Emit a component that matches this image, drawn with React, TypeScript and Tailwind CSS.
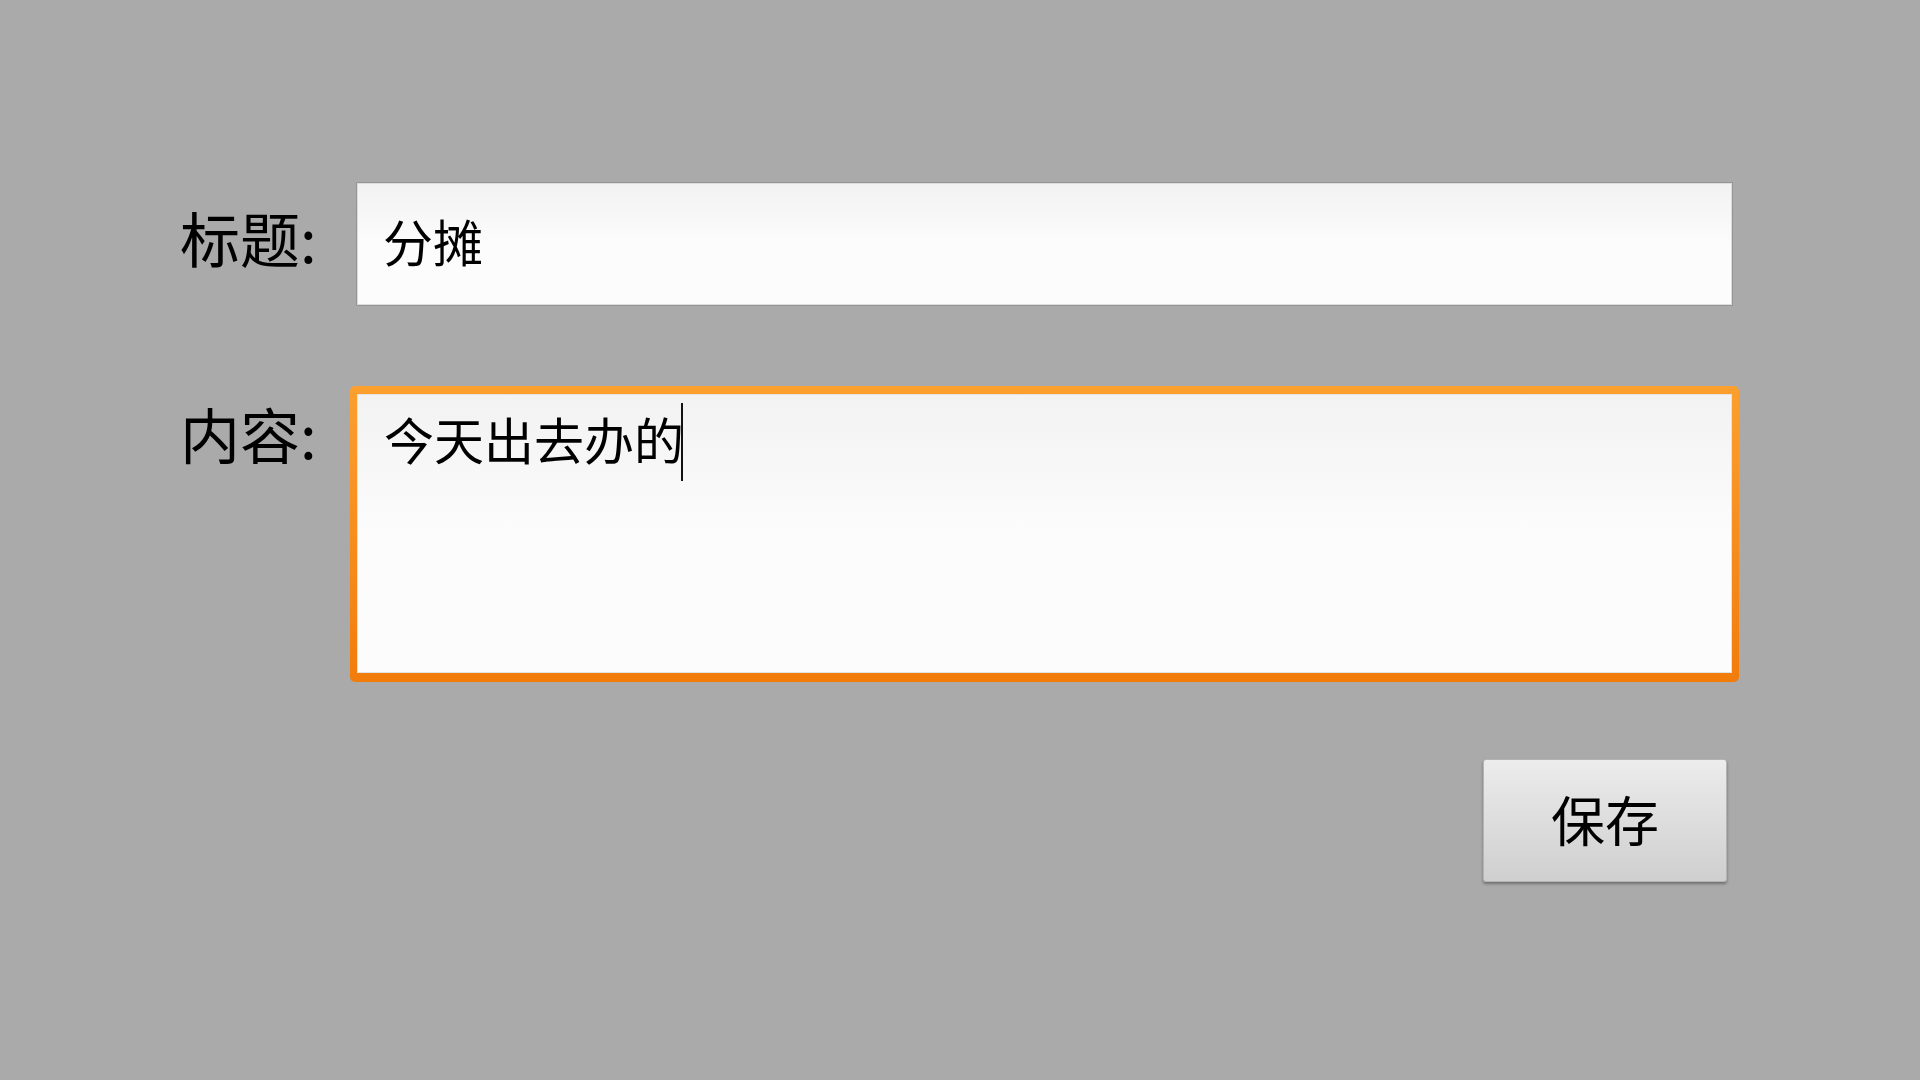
import React from 'react';

const cjk = { fontFamily: '"Noto Sans CJK SC", "Noto Sans", sans-serif' };

const App = () => {
  return (
    <div className="w-[1920px] h-[1080px] bg-[#aaaaaa] text-black overflow-hidden" style={cjk}>
      <div className="pt-[182px] pl-[180px] pr-[181px] flex flex-col">
        {/* Title row */}
        <div className="flex items-center">
          <div className="w-[170px] text-[60px] leading-none mb-[14px]">标题:</div>
          <div className="mx-[6px] flex-1 h-[124px] flex items-center pl-[26px] border border-[#959595] bg-gradient-to-b from-[#f2f2f2] via-[#fcfcfc] to-[#fcfcfc] shadow-[inset_0_0_0_1px_#dcdcdc]">
            <span className="text-[50px] leading-none mb-[8px]">分摊</span>
          </div>
        </div>

        {/* Content row */}
        <div className="flex items-start mt-[80px]">
          <div className="w-[170px] text-[60px] leading-none mt-[17px]">内容:</div>
          <div className="flex-1 h-[296px] rounded-[5px] pt-[8px] pb-[9px] px-[7px] bg-gradient-to-b from-[#fb9f2e] to-[#f17c0a]">
            <div className="h-full bg-gradient-to-b from-[#f2f2f2] via-[#fcfcfc] to-[#fcfcfc] shadow-[inset_0_0_0_1px_#e2e2e2] pl-[27px] pt-[9px] flex items-start">
              <div className="flex items-center h-[78px]">
                <span className="text-[50px] leading-none mb-[8px]">今天出去办的</span>
                <span className="inline-block w-[2px] h-[78px] -ml-[3px] bg-[#111]" />
              </div>
            </div>
          </div>
        </div>

        {/* Save button */}
        <div className="flex justify-end mt-[77px] pr-[12px]">
          <button className="w-[244px] h-[123px] rounded-[3px] border border-[#b4b4b4] bg-gradient-to-b from-[#ececec] to-[#cfcfcf] shadow-[0_2px_3px_rgba(0,0,0,0.35)] text-[54px] leading-none text-black flex items-center justify-center">
            <span className="mb-[4px]">保存</span>
          </button>
        </div>
      </div>
    </div>
  );
};

export default App;
